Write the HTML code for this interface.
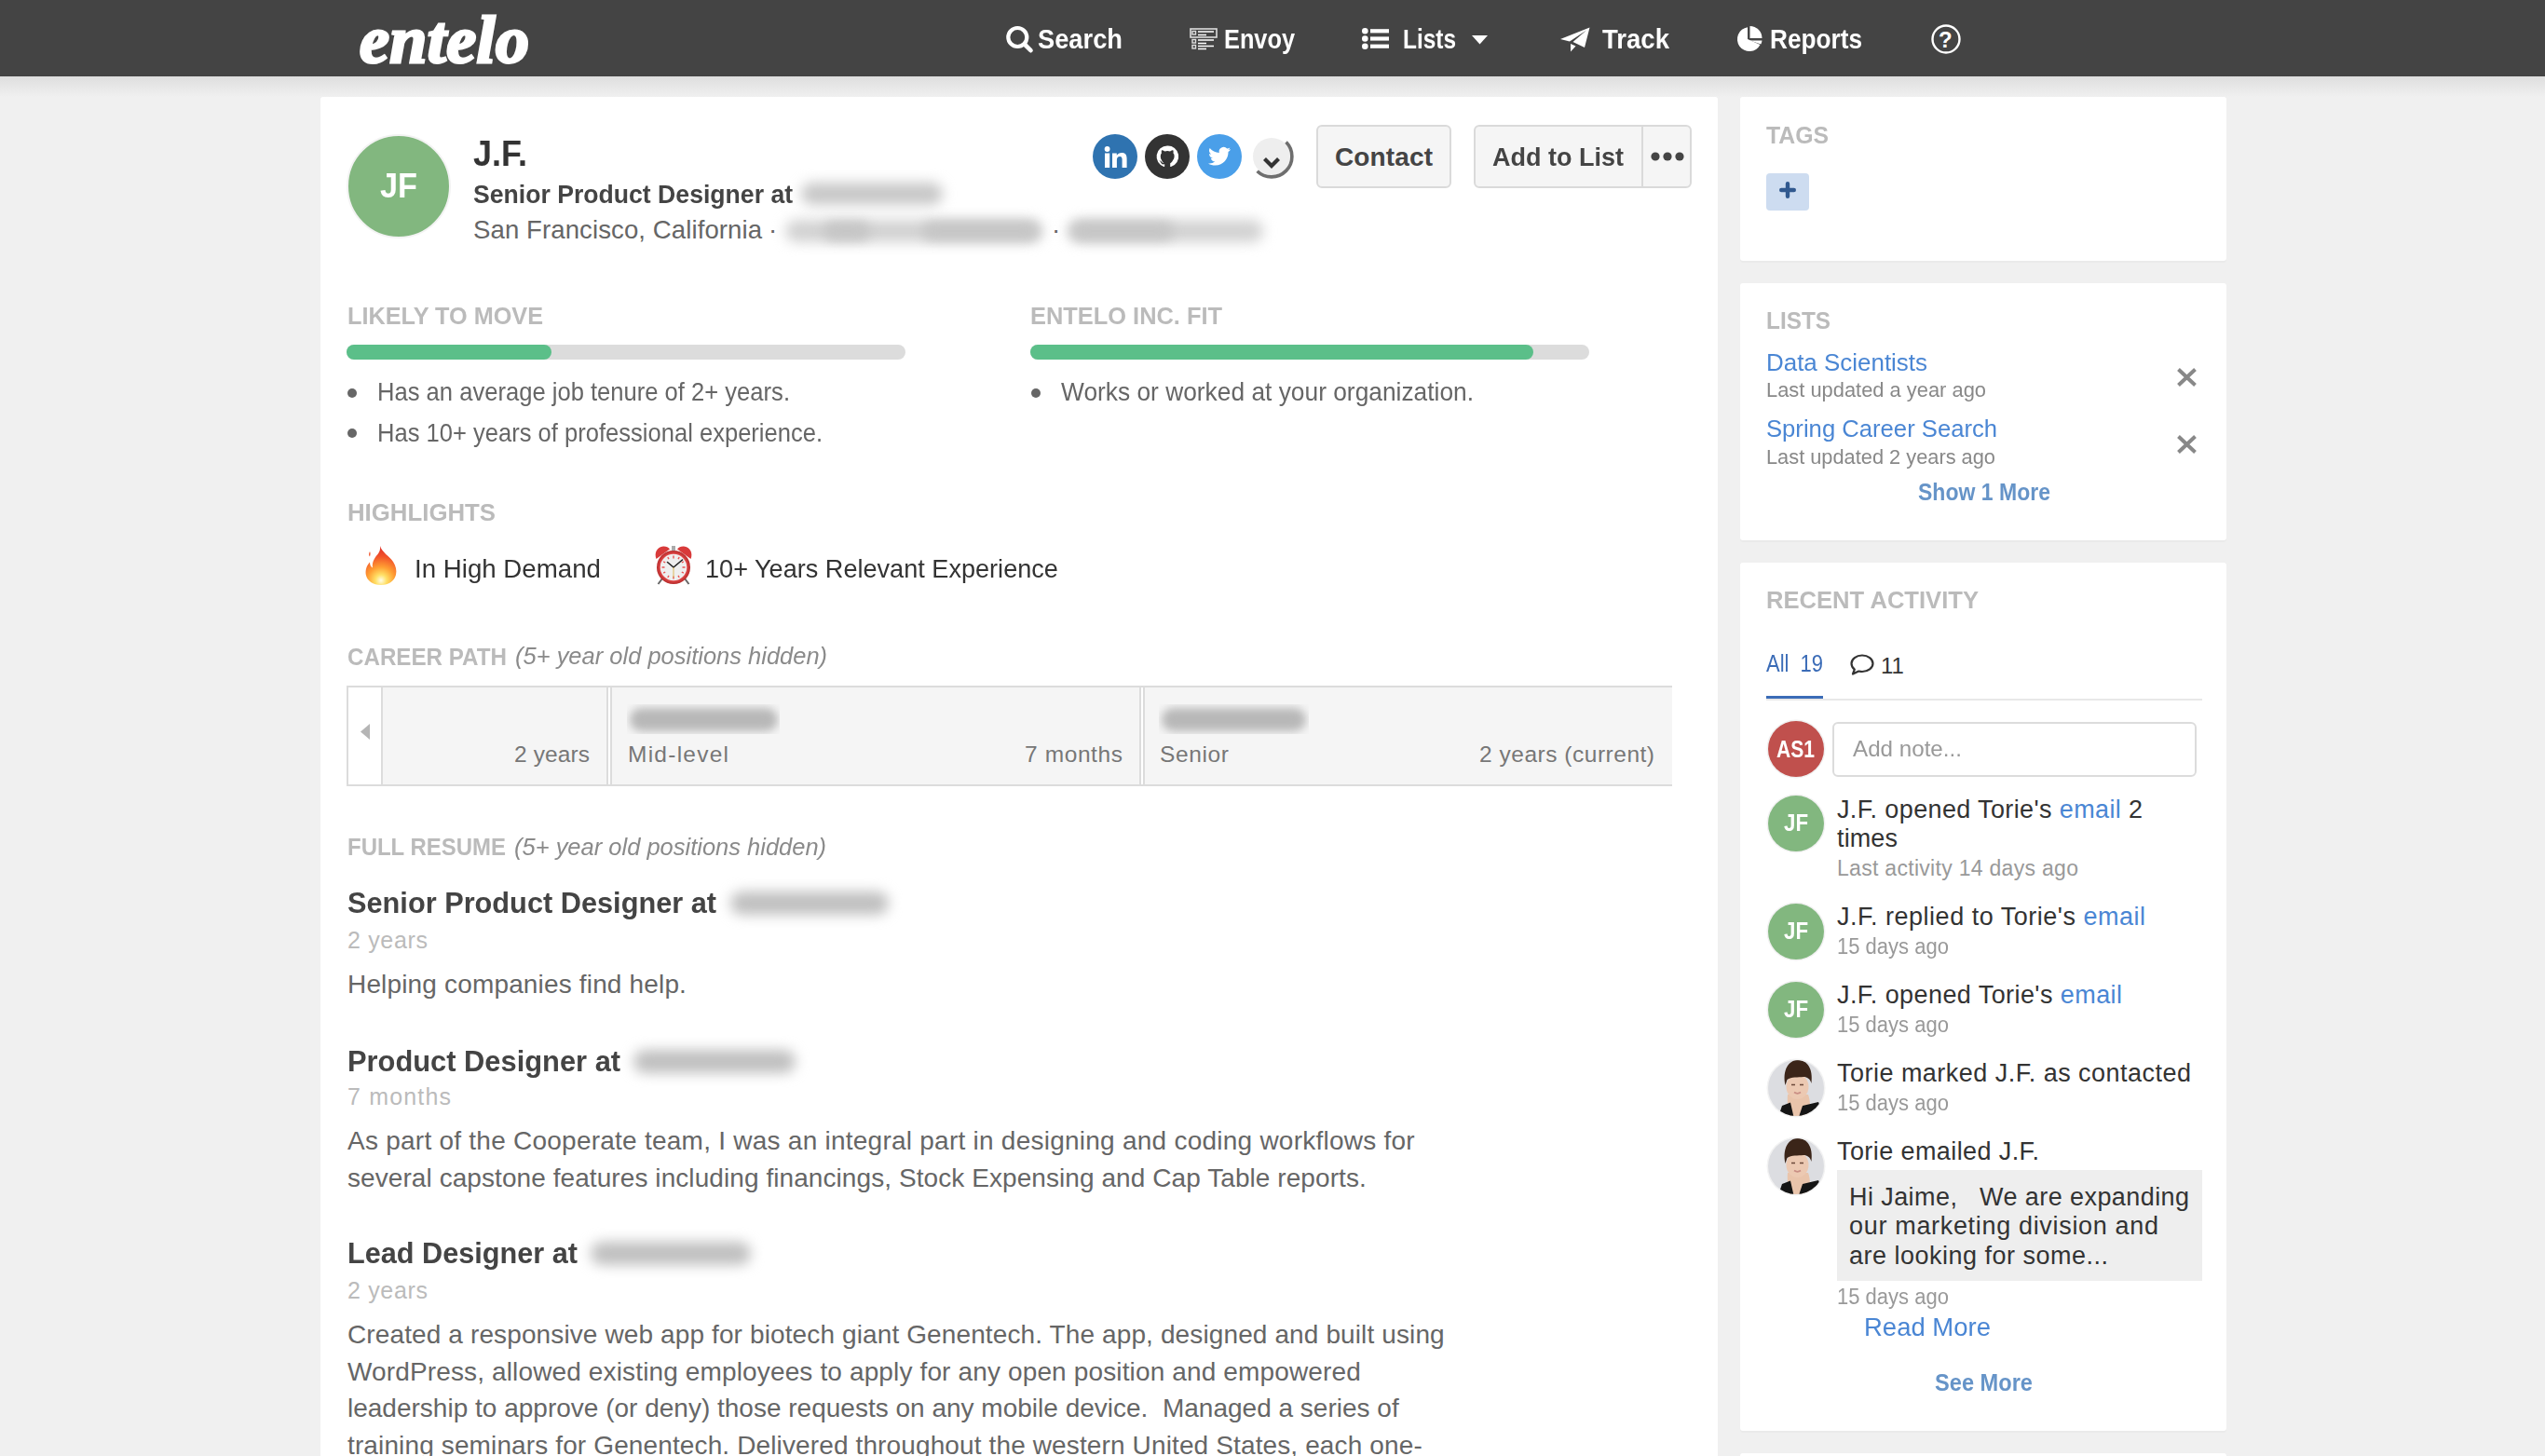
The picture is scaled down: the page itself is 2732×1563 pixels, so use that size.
<!DOCTYPE html><html><head><meta charset="utf-8"><style>
*{margin:0;padding:0;box-sizing:border-box}
html,body{width:2732px;height:1563px;overflow:hidden;background:#f0f0f0;font-family:"Liberation Sans",sans-serif}
.a{position:absolute}
.t{position:absolute;white-space:nowrap}
svg{position:absolute;overflow:visible}
</style></head><body>
<div class="a" style="left:0px;top:0px;width:2732px;height:82px;background:#444444;"></div>
<div class="a" style="left:0px;top:82px;width:2732px;height:22px;background:linear-gradient(#dedede,#f0f0f0);"></div>
<div class="t" style="left:386px;top:-2px;font-family:'Liberation Serif',serif;font-weight:700;font-style:italic;font-size:72px;line-height:90px;color:#fff;letter-spacing:0.4px;-webkit-text-stroke:3px #fff">entelo</div>
<svg style="left:1080px;top:27px" width="32" height="32" viewBox="0 0 32 32"><circle cx="12.3" cy="13" r="10" fill="none" stroke="#fff" stroke-width="4.2"/><path d="M19.8 20.5 L26.5 27.2" stroke="#fff" stroke-width="4.6" stroke-linecap="round"/></svg>
<div class="t" style="left:1114px;top:24.85px;font-size:29px;line-height:35px;color:#fff;font-weight:700;transform:scaleX(0.9409);transform-origin:0 0;">Search</div>
<svg style="left:1277px;top:30px" width="30" height="24" viewBox="0 0 30 24"><rect x="1" y="1" width="28" height="9" fill="none" stroke="#ddd" stroke-width="1.6"/><rect x="3" y="3.5" width="3.5" height="3.5" fill="none" stroke="#ddd" stroke-width="1.4"/><path d="M9 4h17M9 7.5h9" stroke="#fff" stroke-width="1.4"/><rect x="3" y="12.5" width="3.5" height="3.5" fill="none" stroke="#ddd" stroke-width="1.4"/><rect x="3" y="18.5" width="3.5" height="3.5" fill="none" stroke="#ddd" stroke-width="1.4"/><path d="M9 13h17M9 16.5h9M9 19.5h17M9 22.5h9" stroke="#fff" stroke-width="1.4"/></svg>
<div class="t" style="left:1314px;top:24.85px;font-size:29px;line-height:35px;color:#fff;font-weight:700;transform:scaleX(0.8732);transform-origin:0 0;">Envoy</div>
<svg style="left:1462px;top:30px" width="30" height="24" viewBox="0 0 30 24"><circle cx="3.3" cy="3.3" r="3.3" fill="#fff"/><circle cx="3.3" cy="11.5" r="3.3" fill="#fff"/><circle cx="3.3" cy="19.8" r="3.3" fill="#fff"/><rect x="9" y="1.2" width="20" height="4.2" fill="#fff"/><rect x="9" y="9.4" width="20" height="4.2" fill="#fff"/><rect x="9" y="17.6" width="20" height="4.2" fill="#fff"/></svg>
<div class="t" style="left:1506px;top:24.85px;font-size:29px;line-height:35px;color:#fff;font-weight:700;transform:scaleX(0.8421);transform-origin:0 0;">Lists</div>
<svg style="left:1580px;top:38px" width="17" height="10" viewBox="0 0 17 10"><path d="M0 0H17L8.5 9.5Z" fill="#fff"/></svg>
<svg style="left:1675px;top:29px" width="33" height="27" viewBox="0 0 33 27"><path d="M0 13 L31.5 0.5 L26 22 L13.5 16 L28 3.5 L10 15.5 Z" fill="#fff"/><path d="M11 18 L11 26.5 L16.5 20.5 Z" fill="#fff"/></svg>
<div class="t" style="left:1720px;top:24.85px;font-size:29px;line-height:35px;color:#fff;font-weight:700;transform:scaleX(0.9501);transform-origin:0 0;">Track</div>
<svg style="left:1863px;top:28px" width="30" height="28" viewBox="0 0 30 28"><path d="M13 1.2 A13 13 0 1 0 26.5 20 L13 14 Z" fill="#fff"/><path d="M15.5 0 A13 13 0 0 1 28.5 13 L15.5 13 Z" fill="#fff"/><path d="M15.5 15.5 L28.5 15.5 A13 13 0 0 1 27.3 19.5 L15.5 15.5Z" fill="#fff"/></svg>
<div class="t" style="left:1900px;top:24.85px;font-size:29px;line-height:35px;color:#fff;font-weight:700;transform:scaleX(0.9036);transform-origin:0 0;">Reports</div>
<svg style="left:2073px;top:26px" width="32" height="32" viewBox="0 0 32 32"><circle cx="16" cy="16" r="14.5" fill="none" stroke="#fff" stroke-width="2.4"/></svg>
<div class="t" style="left:2081px;top:28.18px;font-size:24px;line-height:29px;color:#fff;font-weight:700;">?</div>
<div class="a" style="left:344px;top:104px;width:1500px;height:1600px;background:#fff;border-radius:3px;box-shadow:0 2px 0 rgba(0,0,0,0.025);"></div>
<div class="a" style="left:1868px;top:104px;width:522px;height:176px;background:#fff;border-radius:3px;box-shadow:0 2px 0 rgba(0,0,0,0.025);"></div>
<div class="a" style="left:1868px;top:304px;width:522px;height:276px;background:#fff;border-radius:3px;box-shadow:0 2px 0 rgba(0,0,0,0.025);"></div>
<div class="a" style="left:1868px;top:604px;width:522px;height:932px;background:#fff;border-radius:3px;box-shadow:0 2px 0 rgba(0,0,0,0.025);"></div>
<div class="a" style="left:1868px;top:1560px;width:522px;height:200px;background:#fff;border-radius:3px;box-shadow:0 2px 0 rgba(0,0,0,0.025);"></div>
<div class="a" style="left:372px;top:144px;width:112px;height:112px;background:#82b77f;border-radius:50%;border:2px solid #f3f3f3;"></div>
<div class="t" style="left:408px;top:177.83px;font-size:36px;line-height:43px;color:#fff;font-weight:700;transform:scaleX(0.9524);transform-origin:0 0;">JF</div>
<div class="t" style="left:508px;top:140.99px;font-size:39px;line-height:47px;color:#333;font-weight:700;transform:scaleX(0.9229);transform-origin:0 0;">J.F.</div>
<div class="t" style="left:508px;top:191.12px;font-size:28.5px;line-height:34px;color:#444;font-weight:700;transform:scaleX(0.9337);transform-origin:0 0;">Senior Product Designer at</div>
<div class="t" style="left:508px;top:229.94px;font-size:27.6px;line-height:33px;color:#666;letter-spacing:0.074px;">San Francisco, California</div>
<div class="t" style="left:825px;top:229.94px;font-size:27.6px;line-height:33px;color:#666;">·</div>
<div class="t" style="left:1129px;top:229.94px;font-size:27.6px;line-height:33px;color:#666;">·</div>
<svg style="left:1173px;top:144px" width="48" height="48" viewBox="0 0 48 48"><circle cx="24" cy="24" r="24" fill="#2f73b0"/><rect x="13" y="20.5" width="5.2" height="15.5" fill="#fff"/><circle cx="15.6" cy="16" r="2.9" fill="#fff"/><path d="M21 20.5h4.8v2.3c1-1.7 3-2.8 5.4-2.8 4.2 0 5.4 2.7 5.4 6.6v9.4h-5v-8.5c0-2.1-.5-3.6-2.5-3.6-2.1 0-3.2 1.5-3.2 3.8v8.3h-4.9z" fill="#fff"/></svg>
<svg style="left:1229px;top:144px" width="48" height="48" viewBox="0 0 48 48"><circle cx="24" cy="24" r="24" fill="#333"/><path d="M24 12.5a11.5 11.5 0 0 0-3.6 22.4c.6.1.8-.2.8-.6v-2c-3.2.7-3.9-1.5-3.9-1.5-.5-1.3-1.3-1.7-1.3-1.7-1-.7.1-.7.1-.7 1.2.1 1.8 1.2 1.8 1.2 1 1.8 2.7 1.3 3.4 1 .1-.7.4-1.3.7-1.6-2.6-.3-5.2-1.3-5.2-5.6 0-1.2.4-2.3 1.2-3.1-.1-.3-.5-1.5.1-3.1 0 0 1-.3 3.2 1.2a11 11 0 0 1 5.8 0c2.2-1.5 3.2-1.2 3.2-1.2.6 1.6.2 2.8.1 3.1.7.8 1.2 1.8 1.2 3.1 0 4.4-2.7 5.4-5.2 5.6.4.4.8 1.1.8 2.2v3.2c0 .3.2.7.8.6A11.5 11.5 0 0 0 24 12.5z" fill="#fff"/><path d="M17.5 25.5c0 3.8 3 6.5 6.5 6.5s6.5-2.7 6.5-6.5c0-3.6-3-5.7-6.5-5.7s-6.5 2.1-6.5 5.7z" fill="#333"/></svg>
<svg style="left:1285px;top:144px" width="48" height="48" viewBox="0 0 48 48"><circle cx="24" cy="24" r="24" fill="#4a9fe9"/><path d="M36 16.3c-.9.4-1.8.6-2.8.8 1-.6 1.8-1.6 2.1-2.7-.9.6-2 1-3.1 1.2a4.9 4.9 0 0 0-8.4 4.5c-4.1-.2-7.7-2.2-10.1-5.1-.4.7-.7 1.6-.7 2.5 0 1.7.9 3.2 2.2 4.1-.8 0-1.6-.2-2.2-.6v.1c0 2.4 1.7 4.4 3.9 4.8-.4.1-.8.2-1.3.2-.3 0-.6 0-.9-.1.6 2 2.4 3.4 4.6 3.4a9.8 9.8 0 0 1-7.3 2c2.2 1.4 4.8 2.2 7.5 2.2 9 0 14-7.5 14-14v-.6c1-.7 1.8-1.6 2.5-2.6z" fill="#fff"/></svg>
<svg style="left:1335px;top:135px" width="65" height="65" viewBox="0 0 65 65"><circle cx="30" cy="33" r="20" fill="#eeeeee"/><path d="M45.56 17.44 A22 22 0 0 1 14.6 48.7" fill="none" stroke="#6e6e6e" stroke-width="3.6"/><path d="M22.5 35.5 L30 43 L37.5 35.5" fill="none" stroke="#333" stroke-width="4.2"/></svg>
<div class="a" style="left:1413px;top:134px;width:145px;height:68px;background:#f5f5f5;border:2px solid #dadada;border-radius:6px;"></div>
<div class="t" style="left:1433px;top:151.60px;font-size:28px;line-height:34px;color:#444;font-weight:700;letter-spacing:0.125px;">Contact</div>
<div class="a" style="left:1582px;top:134px;width:234px;height:68px;background:#f5f5f5;border:2px solid #dadada;border-radius:6px;"></div>
<div class="a" style="left:1762px;top:136px;width:2px;height:64px;background:#dadada;"></div>
<div class="t" style="left:1602px;top:151.60px;font-size:28px;line-height:34px;color:#444;font-weight:700;transform:scaleX(0.9642);transform-origin:0 0;">Add to List</div>
<svg style="left:1772px;top:162px" width="36" height="12" viewBox="0 0 36 12"><circle cx="5" cy="6" r="4.6" fill="#444"/><circle cx="18" cy="6" r="4.6" fill="#444"/><circle cx="31" cy="6" r="4.6" fill="#444"/></svg>
<div class="t" style="left:373px;top:322.82px;font-size:26.5px;line-height:32px;color:#bbbbbb;font-weight:700;transform:scaleX(0.9530);transform-origin:0 0;">LIKELY TO MOVE</div>
<div class="a" style="left:372px;top:370px;width:600px;height:16px;background:#dcdcdc;border-radius:8px;"></div>
<div class="a" style="left:372px;top:370px;width:220px;height:16px;background:#5bbf89;border-radius:8px;"></div>
<div class="t" style="left:1106px;top:322.82px;font-size:26.5px;line-height:32px;color:#bbbbbb;font-weight:700;transform:scaleX(0.9585);transform-origin:0 0;">ENTELO INC. FIT</div>
<div class="a" style="left:1106px;top:370px;width:600px;height:16px;background:#dcdcdc;border-radius:8px;"></div>
<div class="a" style="left:1106px;top:370px;width:540px;height:16px;background:#5bbf89;border-radius:8px;"></div>
<div class="a" style="left:373px;top:417px;width:10px;height:10px;background:#666;border-radius:50%;"></div>
<div class="t" style="left:405px;top:404.14px;font-size:27.6px;line-height:33px;color:#666;transform:scaleX(0.9271);transform-origin:0 0;">Has an average job tenure of 2+ years.</div>
<div class="a" style="left:373px;top:460px;width:10px;height:10px;background:#666;border-radius:50%;"></div>
<div class="t" style="left:405px;top:447.84px;font-size:27.6px;line-height:33px;color:#666;transform:scaleX(0.9262);transform-origin:0 0;">Has 10+ years of professional experience.</div>
<div class="a" style="left:1107px;top:417px;width:10px;height:10px;background:#666;border-radius:50%;"></div>
<div class="t" style="left:1139px;top:404.14px;font-size:27.6px;line-height:33px;color:#666;transform:scaleX(0.9544);transform-origin:0 0;">Works or worked at your organization.</div>
<div class="t" style="left:373px;top:533.82px;font-size:26.5px;line-height:32px;color:#bbbbbb;font-weight:700;transform:scaleX(0.9730);transform-origin:0 0;">HIGHLIGHTS</div>
<svg style="left:392px;top:586px" width="34" height="42" viewBox="0 0 34 42"><defs><radialGradient id="fg" cx="17" cy="37" r="34" gradientUnits="userSpaceOnUse"><stop offset="0" stop-color="#fffde8"/><stop offset="0.18" stop-color="#ffe066"/><stop offset="0.42" stop-color="#ffa033"/><stop offset="0.75" stop-color="#f2542a"/><stop offset="1" stop-color="#e2362a"/></radialGradient></defs><path d="M16 0 C18 7 26 11 30 17 C33 22 34 26 33 31 C31.5 37.5 25.5 42 17 42 C8.5 42 2 37.5 0.8 31 C0 26 1.5 21 5 17.5 C5 20.5 6 22.5 8 23.5 C7 17 10.5 12.5 13.5 9 C15.5 6.5 16.5 3.5 16 0 Z" fill="url(#fg)"/><path d="M5 6 C4 8 3.5 10 5 11.5 C5.5 9.5 6 8 5 6Z" fill="#f2542a"/></svg>
<div class="t" style="left:445px;top:594.30px;font-size:28px;line-height:34px;color:#333;transform:scaleX(0.9883);transform-origin:0 0;">In High Demand</div>
<svg style="left:702px;top:585px" width="42" height="43" viewBox="0 0 42 43"><defs><radialGradient id="cg" cx="21" cy="24" r="18" gradientUnits="userSpaceOnUse"><stop offset="0.8" stop-color="#e04848"/><stop offset="1" stop-color="#b52a2a"/></radialGradient></defs><path d="M2.5 15 C0 9 3 2 10 1.5 C13 1.3 15.5 2.5 17 4.5 Z" fill="#d83a3a"/><path d="M39.5 15 C42 9 39 2 32 1.5 C29 1.3 26.5 2.5 25 4.5 Z" fill="#d83a3a"/><rect x="19" y="1" width="4" height="5" fill="#aaa"/><path d="M9 36 L4.5 42 M33 36 L37.5 42" stroke="#666" stroke-width="2"/><circle cx="21" cy="24" r="18" fill="url(#cg)"/><circle cx="21" cy="24" r="14.3" fill="#efefef"/><g stroke="#e85555" stroke-width="1.4"><path d="M21 11.5v3M21 33.5v3M8.5 24h3M30.5 24h3M14.8 13.2l1.2 2M26 32.8l1.2 2M10.2 17.8l2 1.2M29.8 29l2 1.2M27.2 13.2l-1.2 2M16 32.8l-1.2 2M31.8 17.8l-2 1.2M12.2 29l-2 1.2"/></g><path d="M21 24 L14.5 18.5 M21 24 L30.5 16" stroke="#222" stroke-width="1.6" stroke-linecap="round"/><path d="M21 24 V35" stroke="#d9b44a" stroke-width="0.9"/></svg>
<div class="t" style="left:757px;top:594.30px;font-size:28px;line-height:34px;color:#333;transform:scaleX(0.9678);transform-origin:0 0;">10+ Years Relevant Experience</div>
<div class="t" style="left:373px;top:688.82px;font-size:26.5px;line-height:32px;color:#bbbbbb;font-weight:700;transform:scaleX(0.9122);transform-origin:0 0;">CAREER PATH</div>
<div class="t" style="left:553px;top:689.49px;font-size:26px;line-height:31px;color:#8a8a8a;font-style:italic;transform:scaleX(0.9803);transform-origin:0 0;">(5+ year old positions hidden)</div>
<div class="a" style="left:372px;top:736px;width:1423px;height:108px;background:#fff;border:2px solid #dcdcdc;border-right:none;"></div>
<div class="a" style="left:411px;top:738px;width:240px;height:104px;background:#f5f5f5;"></div>
<div class="a" style="left:409px;top:738px;width:2px;height:104px;background:#dcdcdc;"></div>
<div class="a" style="left:651px;top:736px;width:2px;height:108px;background:#dcdcdc;"></div>
<div class="a" style="left:655px;top:736px;width:570px;height:108px;background:#f5f5f5;border:2px solid #dcdcdc;"></div>
<div class="a" style="left:1227px;top:736px;width:568px;height:108px;background:#f5f5f5;border:2px solid #dcdcdc;border-right:none;"></div>
<svg style="left:387px;top:777px" width="11" height="18" viewBox="0 0 11 18"><path d="M10 0V17L0 8.5Z" fill="#b5b5b5"/></svg>
<div class="t" style="left:552px;top:795.31px;font-size:24.5px;line-height:29px;color:#777;letter-spacing:0.109px;">2 years</div>
<div class="t" style="left:674px;top:795.31px;font-size:24.5px;line-height:29px;color:#777;letter-spacing:1.250px;">Mid-level</div>
<div class="t" style="left:1100px;top:795.31px;font-size:24.5px;line-height:29px;color:#777;letter-spacing:0.603px;">7 months</div>
<div class="t" style="left:1245px;top:795.31px;font-size:24.5px;line-height:29px;color:#777;letter-spacing:0.637px;">Senior</div>
<div class="t" style="left:1588px;top:795.31px;font-size:24.5px;line-height:29px;color:#777;letter-spacing:0.518px;">2 years (current)</div>
<div class="t" style="left:373px;top:893.02px;font-size:26.5px;line-height:32px;color:#bbbbbb;font-weight:700;transform:scaleX(0.9045);transform-origin:0 0;">FULL RESUME</div>
<div class="t" style="left:552px;top:893.69px;font-size:26px;line-height:31px;color:#8a8a8a;font-style:italic;transform:scaleX(0.9803);transform-origin:0 0;">(5+ year old positions hidden)</div>
<div class="t" style="left:373px;top:950.09px;font-size:31.5px;line-height:38px;color:#444;font-weight:700;transform:scaleX(0.9753);transform-origin:0 0;">Senior Product Designer at</div>
<div class="t" style="left:373px;top:993.94px;font-size:25px;line-height:30px;color:#bbb;letter-spacing:0.667px;">2 years</div>
<div class="t" style="left:373px;top:1039.70px;font-size:28px;line-height:34px;color:#666;letter-spacing:0.161px;">Helping companies find help.</div>
<div class="t" style="left:373px;top:1119.59px;font-size:31.5px;line-height:38px;color:#444;font-weight:700;transform:scaleX(0.9791);transform-origin:0 0;">Product Designer at</div>
<div class="t" style="left:373px;top:1162.34px;font-size:25px;line-height:30px;color:#bbb;letter-spacing:1.163px;">7 months</div>
<div class="t" style="left:373px;top:1207.70px;font-size:28px;line-height:34px;color:#666;letter-spacing:0.244px;">As part of the Cooperate team, I was an integral part in designing and coding workflows for</div>
<div class="t" style="left:373px;top:1247.80px;font-size:28px;line-height:34px;color:#666;letter-spacing:0.074px;">several capstone features including financings, Stock Expensing and Cap Table reports.</div>
<div class="t" style="left:373px;top:1325.89px;font-size:31.5px;line-height:38px;color:#444;font-weight:700;transform:scaleX(0.9733);transform-origin:0 0;">Lead Designer at</div>
<div class="t" style="left:373px;top:1370.34px;font-size:25px;line-height:30px;color:#bbb;letter-spacing:0.667px;">2 years</div>
<div class="t" style="left:373px;top:1415.70px;font-size:28px;line-height:34px;color:#666;letter-spacing:0.119px;">Created a responsive web app for biotech giant Genentech. The app, designed and built using</div>
<div class="t" style="left:373px;top:1455.70px;font-size:28px;line-height:34px;color:#666;letter-spacing:0.138px;">WordPress, allowed existing employees to apply for any open position and empowered</div>
<div class="t" style="left:373px;top:1495.30px;font-size:28px;line-height:34px;color:#666;letter-spacing:0.003px;">leadership to approve (or deny) those requests on any mobile device.&nbsp; Managed a series of</div>
<div class="t" style="left:373px;top:1535.30px;font-size:28px;line-height:34px;color:#666;letter-spacing:0.127px;">training seminars for Genentech. Delivered throughout the western United States, each one-</div>
<div class="t" style="left:1896px;top:129.59px;font-size:26px;line-height:31px;color:#bbbbbb;font-weight:700;transform:scaleX(0.9531);transform-origin:0 0;">TAGS</div>
<div class="a" style="left:1896px;top:186px;width:46px;height:40px;background:#cddcf0;border-radius:4px;"></div>
<svg style="left:1910px;top:195px" width="18" height="18" viewBox="0 0 18 18"><path d="M9 2.2V15.8M2.2 9H15.8" stroke="#31598f" stroke-width="4.4" stroke-linecap="round"/></svg>
<div class="t" style="left:1896px;top:329.19px;font-size:26px;line-height:31px;color:#bbbbbb;font-weight:700;transform:scaleX(0.9368);transform-origin:0 0;">LISTS</div>
<div class="t" style="left:1896px;top:373.69px;font-size:26px;line-height:31px;color:#4a86d4;transform:scaleX(0.9978);transform-origin:0 0;">Data Scientists</div>
<div class="t" style="left:1896px;top:405.00px;font-size:22.5px;line-height:27px;color:#888;transform:scaleX(0.9723);transform-origin:0 0;">Last updated a year ago</div>
<svg style="left:2337px;top:395px" width="21" height="20" viewBox="0 0 21 20"><path d="M1.5 1.5L19.5 18.5M19.5 1.5L1.5 18.5" stroke="#888" stroke-width="4"/></svg>
<div class="t" style="left:1896px;top:445.49px;font-size:26px;line-height:31px;color:#4a86d4;transform:scaleX(0.9865);transform-origin:0 0;">Spring Career Search</div>
<div class="t" style="left:1896px;top:476.70px;font-size:22.5px;line-height:27px;color:#888;transform:scaleX(0.9686);transform-origin:0 0;">Last updated 2 years ago</div>
<svg style="left:2337px;top:467px" width="21" height="20" viewBox="0 0 21 20"><path d="M1.5 1.5L19.5 18.5M19.5 1.5L1.5 18.5" stroke="#888" stroke-width="4"/></svg>
<div class="t" style="left:2059px;top:512.94px;font-size:25px;line-height:30px;color:#6694c8;font-weight:700;transform:scaleX(0.9209);transform-origin:0 0;">Show 1 More</div>
<div class="t" style="left:1896px;top:629.49px;font-size:26px;line-height:31px;color:#bbbbbb;font-weight:700;transform:scaleX(0.9845);transform-origin:0 0;">RECENT ACTIVITY</div>
<div class="t" style="left:1896px;top:696.64px;font-size:25px;line-height:30px;color:#3b6cb7;transform:scaleX(0.8779);transform-origin:0 0;">All&nbsp; 19</div>
<svg style="left:1986px;top:702px" width="26" height="23" viewBox="0 0 26 23"><path d="M13 1.5c6.3 0 11.5 3.9 11.5 8.7S19.3 19 13 19c-1.3 0-2.5-.2-3.7-.5L3 21.5l1.8-4.8C2.7 15 1.5 12.7 1.5 10.2 1.5 5.4 6.7 1.5 13 1.5z" fill="none" stroke="#333" stroke-width="2.2" stroke-linejoin="round"/></svg>
<div class="t" style="left:2019px;top:699.58px;font-size:24px;line-height:29px;color:#333;">11</div>
<div class="a" style="left:1896px;top:750px;width:468px;height:2px;background:#e8e8e8;"></div>
<div class="a" style="left:1896px;top:747px;width:61px;height:3px;background:#3b6cb7;"></div>
<div class="a" style="left:1898px;top:774px;width:60px;height:60px;background:#c0504d;border-radius:50%;box-shadow:0 0 0 1.5px #f0f0f0;"></div>
<div class="t" style="left:1907px;top:788.74px;font-size:25px;line-height:30px;color:#fff;font-weight:700;transform:scaleX(0.8432);transform-origin:0 0;">AS1</div>
<div class="a" style="left:1967px;top:775px;width:391px;height:59px;background:#fff;border:2px solid #dcdcdc;border-radius:6px;"></div>
<div class="t" style="left:1989px;top:789.41px;font-size:24.5px;line-height:29px;color:#999;transform:scaleX(0.9871);transform-origin:0 0;">Add note...</div>
<div class="a" style="left:1898px;top:854px;width:60px;height:60px;background:#82b77f;border-radius:50%;box-shadow:0 0 0 1.5px #f0f0f0;"></div>
<div class="t" style="left:1915px;top:868.34px;font-size:25px;line-height:30px;color:#fff;font-weight:700;transform:scaleX(0.8913);transform-origin:0 0;">JF</div>
<div class="t" style="left:1972px;top:852.64px;font-size:27px;line-height:32px;color:#333;letter-spacing:0.373px;">J.F. opened Torie's <span style='color:#4a86d4'>email</span> 2</div>
<div class="t" style="left:1972px;top:884.04px;font-size:27px;line-height:32px;color:#333;letter-spacing:0.125px;">times</div>
<div class="t" style="left:1972px;top:917.63px;font-size:23px;line-height:28px;color:#999;letter-spacing:0.295px;">Last activity 14 days ago</div>
<div class="a" style="left:1898px;top:970px;width:60px;height:60px;background:#82b77f;border-radius:50%;box-shadow:0 0 0 1.5px #f0f0f0;"></div>
<div class="t" style="left:1915px;top:984.34px;font-size:25px;line-height:30px;color:#fff;font-weight:700;transform:scaleX(0.8913);transform-origin:0 0;">JF</div>
<div class="t" style="left:1972px;top:968.14px;font-size:27px;line-height:32px;color:#333;letter-spacing:0.508px;">J.F. replied to Torie's <span style='color:#4a86d4'>email</span></div>
<div class="t" style="left:1972px;top:1002.33px;font-size:23px;line-height:28px;color:#999;transform:scaleX(0.9572);transform-origin:0 0;">15 days ago</div>
<div class="a" style="left:1898px;top:1054px;width:60px;height:60px;background:#82b77f;border-radius:50%;box-shadow:0 0 0 1.5px #f0f0f0;"></div>
<div class="t" style="left:1915px;top:1068.34px;font-size:25px;line-height:30px;color:#fff;font-weight:700;transform:scaleX(0.8913);transform-origin:0 0;">JF</div>
<div class="t" style="left:1972px;top:1052.24px;font-size:27px;line-height:32px;color:#333;letter-spacing:0.425px;">J.F. opened Torie's <span style='color:#4a86d4'>email</span></div>
<div class="t" style="left:1972px;top:1086.23px;font-size:23px;line-height:28px;color:#999;transform:scaleX(0.9572);transform-origin:0 0;">15 days ago</div>
<svg style="left:1896px;top:1136px" width="64" height="64" viewBox="-1 -1 64 64"><defs><clipPath id="c1137"><circle cx="31" cy="31" r="30"/></clipPath></defs><circle cx="31" cy="31" r="31.5" fill="#f2f2f2"/><g clip-path="url(#c1137)"><rect x="-1" y="-1" width="64" height="64" fill="#dcdde1"/><path d="M22 38 C21 48 24 62 24 62 H44 C46 55 47 46 44 38 Z" fill="#e9c4ab"/><ellipse cx="32.5" cy="29.5" rx="12" ry="13.5" fill="#ecc9b2"/><path d="M19.5 28 C16 12 23 1 33 1 C43 1 49.5 10 47.5 26 C46 21 43 19 39 19 C33 19.5 26 19 21.5 22 Z" fill="#3b2519"/><path d="M26 27.5h4M35 27.5h4" stroke="#6b4a3a" stroke-width="1.6"/><path d="M29 35.5 C31 37 34 37 36 35.5" stroke="#c98e84" stroke-width="1.6" fill="none"/><path d="M12 62 L16 50 L25 46.5 L28.5 62 Z M34 62 L38 50 L55 46 L59 56 L53 62 Z" fill="#151515"/></g></svg>
<div class="t" style="left:1972px;top:1135.94px;font-size:27px;line-height:32px;color:#333;letter-spacing:0.478px;">Torie marked J.F. as contacted</div>
<div class="t" style="left:1972px;top:1169.83px;font-size:23px;line-height:28px;color:#999;transform:scaleX(0.9572);transform-origin:0 0;">15 days ago</div>
<svg style="left:1896px;top:1220px" width="64" height="64" viewBox="-1 -1 64 64"><defs><clipPath id="c1221"><circle cx="31" cy="31" r="30"/></clipPath></defs><circle cx="31" cy="31" r="31.5" fill="#f2f2f2"/><g clip-path="url(#c1221)"><rect x="-1" y="-1" width="64" height="64" fill="#dcdde1"/><path d="M22 38 C21 48 24 62 24 62 H44 C46 55 47 46 44 38 Z" fill="#e9c4ab"/><ellipse cx="32.5" cy="29.5" rx="12" ry="13.5" fill="#ecc9b2"/><path d="M19.5 28 C16 12 23 1 33 1 C43 1 49.5 10 47.5 26 C46 21 43 19 39 19 C33 19.5 26 19 21.5 22 Z" fill="#3b2519"/><path d="M26 27.5h4M35 27.5h4" stroke="#6b4a3a" stroke-width="1.6"/><path d="M29 35.5 C31 37 34 37 36 35.5" stroke="#c98e84" stroke-width="1.6" fill="none"/><path d="M12 62 L16 50 L25 46.5 L28.5 62 Z M34 62 L38 50 L55 46 L59 56 L53 62 Z" fill="#151515"/></g></svg>
<div class="t" style="left:1972px;top:1219.84px;font-size:27px;line-height:32px;color:#333;letter-spacing:0.408px;">Torie emailed J.F.</div>
<div class="a" style="left:1972px;top:1256px;width:392px;height:119px;background:#eeeeee;"></div>
<div class="t" style="left:1985px;top:1268.64px;font-size:27px;line-height:32px;color:#333;letter-spacing:0.420px;">Hi Jaime,&nbsp;&nbsp; We are expanding</div>
<div class="t" style="left:1985px;top:1300.04px;font-size:27px;line-height:32px;color:#333;letter-spacing:0.674px;">our marketing division and</div>
<div class="t" style="left:1985px;top:1331.64px;font-size:27px;line-height:32px;color:#333;letter-spacing:0.496px;">are looking for some...</div>
<div class="t" style="left:1972px;top:1378.03px;font-size:23px;line-height:28px;color:#999;transform:scaleX(0.9572);transform-origin:0 0;">15 days ago</div>
<div class="t" style="left:2001px;top:1407.50px;font-size:28px;line-height:34px;color:#4a86d4;transform:scaleX(0.9816);transform-origin:0 0;">Read More</div>
<div class="t" style="left:2077px;top:1468.64px;font-size:25px;line-height:30px;color:#6694c8;font-weight:700;transform:scaleX(0.9445);transform-origin:0 0;">See More</div>
<div class="a" style="left:860px;top:196px;width:152px;height:24px;background:#c8c8c8;border-radius:12.0px;filter:blur(7px)"></div>
<div class="a" style="left:843px;top:236px;width:276px;height:24px;background:#d2d2d2;border-radius:12.0px;filter:blur(7px)"></div>
<div class="a" style="left:884px;top:238px;width:50px;height:20px;background:#c6c6c6;border-radius:10.0px;filter:blur(6px)"></div>
<div class="a" style="left:990px;top:238px;width:125px;height:20px;background:#c6c6c6;border-radius:10.0px;filter:blur(6px)"></div>
<div class="a" style="left:1146px;top:236px;width:210px;height:24px;background:#d2d2d2;border-radius:12.0px;filter:blur(7px)"></div>
<div class="a" style="left:1150px;top:238px;width:110px;height:20px;background:#c6c6c6;border-radius:10.0px;filter:blur(6px)"></div>
<div class="a" style="left:673px;top:756px;width:164px;height:32px;overflow:hidden"><div style="position:absolute;left:3px;top:4px;width:159px;height:25px;background:#b8b8b8;border-radius:12.5px;filter:blur(5px)"></div></div>
<div class="a" style="left:1244px;top:756px;width:161px;height:32px;overflow:hidden"><div style="position:absolute;left:3px;top:4px;width:155px;height:25px;background:#b8b8b8;border-radius:12.5px;filter:blur(5px)"></div></div>
<div class="a" style="left:784px;top:957px;width:170px;height:25px;background:#c0c0c0;border-radius:12.5px;filter:blur(7px)"></div>
<div class="a" style="left:680px;top:1127px;width:174px;height:25px;background:#c0c0c0;border-radius:12.5px;filter:blur(7px)"></div>
<div class="a" style="left:634px;top:1333px;width:172px;height:25px;background:#c0c0c0;border-radius:12.5px;filter:blur(7px)"></div>
</body></html>
